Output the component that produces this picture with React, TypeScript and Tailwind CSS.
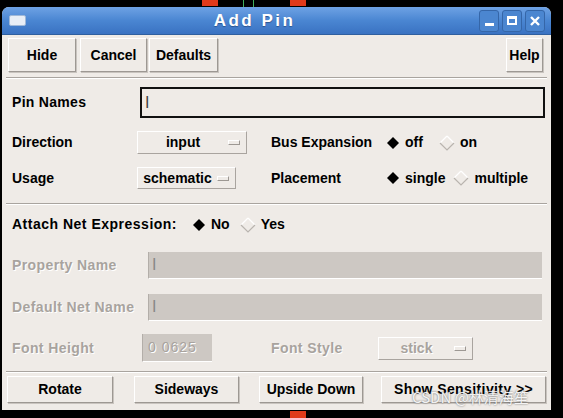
import React from 'react';

const font = { fontFamily: '"Liberation Sans", Arial, sans-serif' };

function Btn({ label, className = '' }: { label: string; className?: string }) {
  return (
    <div
      className={`flex items-center justify-center bg-[#efebe7] border border-t-white border-l-white border-b-[#9d9893] border-r-[#9d9893] shadow-[1px_1px_0_#c9c4bf] text-[14px] font-bold text-black ${className}`}
    >
      {label}
    </div>
  );
}

function Dropdown({ value, className = '', disabled = false }: { value: string; className?: string; disabled?: boolean }) {
  return (
    <div
      className={`flex items-center bg-[#efebe7] border border-t-white border-l-white border-b-[#a9a49f] border-r-[#a9a49f] text-[14px] font-bold ${disabled ? 'text-[#a8a39e] [text-shadow:1px_1px_0_#fff]' : 'text-black'} ${className}`}
    >
      <span className="flex-1 text-center">{value}</span>
      <span className="w-[12px] h-[5px] mr-[6px] border border-t-white border-l-white border-b-[#9d9893] border-r-[#9d9893]" />
    </div>
  );
}

function Radio({ on, label }: { on: boolean; label: string }) {
  return (
    <div className="flex items-center gap-[5px]">
      {on ? (
        <svg width="14" height="14" viewBox="0 0 14 14">
          <path d="M7 1 L13 7 L7 13 L1 7 Z" fill="#000" />
        </svg>
      ) : (
        <svg width="16" height="16" viewBox="0 0 16 16">
          <path d="M8 1 L1 8" stroke="#fff" strokeWidth="1.2" fill="none" />
          <path d="M8 1 L15 8" stroke="#fff" strokeWidth="1.2" fill="none" />
          <path d="M1 8 L8 15 L15 8" stroke="#b9b4af" strokeWidth="1.2" fill="none" />
        </svg>
      )}
      <span className="text-[14px] font-bold text-black">{label}</span>
    </div>
  );
}

function Separator({ className = '' }: { className?: string }) {
  return <div className={`h-[2px] border-t border-t-[#a9a49f] border-b border-b-white mx-[4px] ${className}`} />;
}

const dim = 'text-[14px] font-bold text-[#a8a39e] [text-shadow:1px_1px_0_#fff] tracking-[0.4px]';

export default function App() {
  return (
    <div className="relative w-[563px] h-[418px] bg-black overflow-hidden" style={font}>
      {/* schematic bits behind the dialog */}
      <div className="absolute left-[202px] top-0 w-[16px] h-[6px] bg-[#e03a1a]" />
      <div className="absolute left-[290px] top-0 w-[16px] h-[6px] bg-[#e03a1a]" />
      <div className="absolute left-[243px] top-0 w-[1px] h-[7px] bg-[#3fae5a]" />
      <div className="absolute left-[253px] top-0 w-[1px] h-[7px] bg-[#3fae5a]" />
      <div className="absolute left-[290px] top-[411px] w-[16px] h-[7px] bg-[#e03a1a]" />

      <div className="ml-[2px] mt-[7px] w-[549px] h-[403px] rounded-t-[7px] bg-[#efebe7] flex flex-col overflow-hidden">
        {/* title bar */}
        <div className="h-[28px] shrink-0 flex items-center px-[7px] bg-gradient-to-b from-[#6ea2e4] via-[#4a86d2] to-[#3a72c2] border-b border-b-[#2f5f9f]">
          <div className="w-[17px] h-[11px] rounded-[2px] bg-[#e8eef6] border border-[#9fb8d8]" />
          <div className="flex-1 text-center text-white font-bold text-[17px] tracking-[2.5px] pl-[4px] [text-shadow:0_1px_1px_#2a5590]">
            Add Pin
          </div>
          <div className="flex gap-[3px] mr-[-1px]">
            <div className="w-[20px] h-[22px] rounded-[3px] border border-[#3566a8] bg-[#4b86d0] flex items-end justify-center pb-[5px]">
              <div className="w-[9px] h-[3px] bg-white" />
            </div>
            <div className="w-[20px] h-[22px] rounded-[3px] border border-[#3566a8] bg-[#4b86d0] flex items-center justify-center">
              <div className="w-[10px] h-[9px] border-2 border-white border-t-[3px]" />
            </div>
            <div className="w-[20px] h-[22px] rounded-[3px] border border-[#3566a8] bg-[#4b86d0] flex items-center justify-center">
              <svg width="10" height="10" viewBox="0 0 10 10">
                <path d="M1 1 L9 9 M9 1 L1 9" stroke="#fff" strokeWidth="2.4" />
              </svg>
            </div>
          </div>
        </div>

        {/* top buttons */}
        <div className="flex items-center mt-[3px] h-[34px] pl-[6px] pr-[8px]">
          <Btn label="Hide" className="w-[68px] h-[34px]" />
          <Btn label="Cancel" className="w-[67px] h-[34px] ml-[4px]" />
          <Btn label="Defaults" className="w-[69px] h-[34px] ml-[2px]" />
          <div className="flex-1" />
          <Btn label="Help" className="w-[37px] h-[34px]" />
        </div>
        <Separator className="mt-[5px]" />

        {/* pin names */}
        <div className="flex items-center mt-[8px] pl-[10px] pr-[6px]">
          <span className="w-[128px] text-[14px] font-bold text-black tracking-[0.3px]">Pin Names</span>
          <div className="flex-1 h-[31px] border-2 border-[#111] bg-[#efebe7] flex items-center pl-[3px]">
            <span className="text-[16px] text-[#444] font-light leading-none">I</span>
          </div>
        </div>

        {/* direction */}
        <div className="flex items-center mt-[13px] pl-[10px]">
          <span className="w-[125px] text-[14px] font-bold text-black">Direction</span>
          <Dropdown value="input" className="w-[110px] h-[23px]" />
          <span className="ml-[24px] w-[115px] text-[14px] font-bold text-black">Bus Expansion</span>
          <Radio on label="off" />
          <div className="ml-[16px]">
            <Radio on={false} label="on" />
          </div>
        </div>

        {/* usage */}
        <div className="flex items-center mt-[13px] pl-[10px]">
          <span className="w-[125px] text-[14px] font-bold text-black">Usage</span>
          <Dropdown value="schematic" className="w-[99px] h-[22px]" />
          <span className="ml-[35px] w-[115px] text-[14px] font-bold text-black">Placement</span>
          <Radio on label="single" />
          <div className="ml-[8px]">
            <Radio on={false} label="multiple" />
          </div>
        </div>
        <Separator className="mt-[14px]" />

        {/* attach net expression */}
        <div className="flex items-center mt-[9px] pl-[10px]">
          <span className="w-[180px] text-[14px] font-bold text-black tracking-[0.5px]">Attach Net Expression:</span>
          <Radio on label="No" />
          <div className="ml-[10px]">
            <Radio on={false} label="Yes" />
          </div>
        </div>

        {/* property name */}
        <div className="flex items-center mt-[17px] pl-[10px] pr-[9px]">
          <span className={`w-[136px] ${dim}`}>Property Name</span>
          <div className="flex-1 h-[27px] bg-[#cdc8c3] border-l border-l-[#b3aea9] border-b border-b-white flex items-center pl-[3px]">
            <span className="text-[16px] text-[#888] leading-none">I</span>
          </div>
        </div>

        {/* default net name */}
        <div className="flex items-center mt-[15px] pl-[10px] pr-[9px]">
          <span className={`w-[136px] ${dim}`}>Default Net Name</span>
          <div className="flex-1 h-[27px] bg-[#cdc8c3] border-l border-l-[#b3aea9] border-b border-b-white flex items-center pl-[3px]">
            <span className="text-[16px] text-[#888] leading-none">I</span>
          </div>
        </div>

        {/* font height / style */}
        <div className="flex items-center mt-[13px] pl-[10px]">
          <span className={`w-[130px] ${dim}`}>Font Height</span>
          <div className="w-[70px] h-[28px] bg-[#cdc8c3] border-l border-l-[#b3aea9] border-b border-b-white flex items-center pl-[5px]">
            <span className={`${dim} font-normal tracking-[1px]`}>0 0625</span>
          </div>
          <span className={`ml-[59px] w-[107px] ${dim}`}>Font Style</span>
          <Dropdown value="stick" disabled className="w-[95px] h-[23px]" />
        </div>
        <Separator className="mt-[9px]" />

        {/* bottom buttons */}
        <div className="flex items-center mt-[3px] pl-[5px]">
          <Btn label="Rotate" className="w-[106px] h-[27px]" />
          <Btn label="Sideways" className="w-[105px] h-[27px] ml-[21px]" />
          <Btn label="Upside Down" className="w-[104px] h-[27px] ml-[20px]" />
          <Btn label="Show Sensitivity >>" className="w-[165px] h-[27px] ml-[18px] tracking-[0.4px]" />
        </div>
      </div>

      {/* watermark */}
      <div
        className="absolute left-[412px] top-[386px] text-[15px] text-white/90 [text-shadow:0_0_2px_#555]"
        style={{ fontFamily: '"Noto Sans CJK SC", "Noto Sans", sans-serif' }}
      >
        CSDN @林清海笙
      </div>
    </div>
  );
}
